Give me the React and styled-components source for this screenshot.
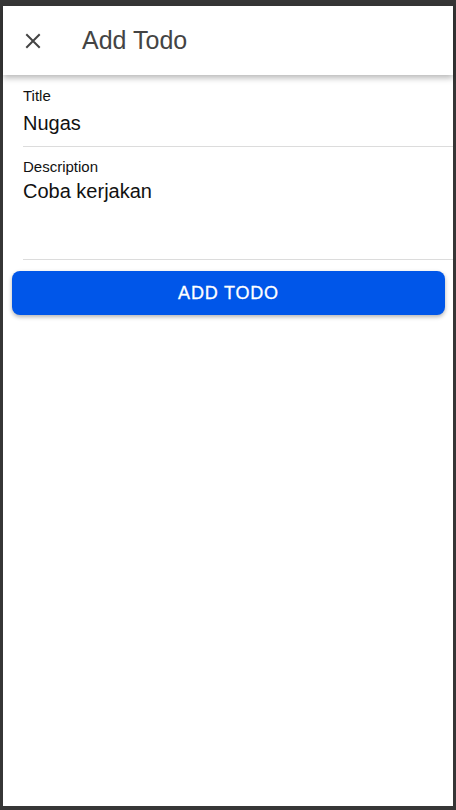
import React from "react";
import styled, { createGlobalStyle } from "styled-components";

const Global = createGlobalStyle`
  html, body { margin: 0; padding: 0; background: #363636; }
  body { font-family: "Liberation Sans", Arial, sans-serif; }
  * { box-sizing: border-box; }
`;

const Screen = styled.div`
  margin: 6px 3px 0 3px;
  height: 800px;
  background: #fff;
  display: flex;
  flex-direction: column;
`;

const Header = styled.header`
  height: 69px;
  display: flex;
  align-items: center;
  background: #fff;
  box-shadow: 0 3px 6px rgba(0, 0, 0, 0.28);
  position: relative;
  z-index: 1;
`;

const CloseButton = styled.button`
  width: 30px;
  height: 30px;
  margin-left: 15px;
  padding: 0;
  border: none;
  background: transparent;
  display: flex;
  align-items: center;
  justify-content: center;
`;

const Title = styled.h1`
  margin: 0 0 0 34px;
  font-size: 25px;
  font-weight: 400;
  color: #444;
`;

const Form = styled.div`
  display: flex;
  flex-direction: column;
  padding-left: 20px;
`;

const Field = styled.div`
  display: flex;
  flex-direction: column;
  padding-top: ${(p) => p.$top}px;
  height: ${(p) => p.$height}px;
  border-bottom: 1px solid #dcdcdc;
`;

const Label = styled.label`
  font-size: 15px;
  line-height: 16px;
  color: #111;
`;

const Value = styled.div`
  font-size: 20px;
  line-height: 24px;
  color: #111;
  margin-top: ${(p) => p.$gap}px;
`;

const ButtonWrap = styled.div`
  padding: 11px 8px 0 9px;
`;

const AddButton = styled.button`
  width: 100%;
  height: 44px;
  border: none;
  border-radius: 8px;
  background: #0056e9;
  color: #fff;
  font-family: "Liberation Sans", Arial, sans-serif;
  font-size: 18px;
  letter-spacing: 0.8px;
  -webkit-text-stroke: 0.3px #fff;
  box-shadow: 0 2px 4px rgba(0, 0, 0, 0.3);
`;

export default function App() {
  return (
    <>
      <Global />
      <Screen>
        <Header>
          <CloseButton aria-label="close">
            <svg width="16" height="16" viewBox="0 0 16 16">
              <path d="M2 2 L14 14 M14 2 L2 14" stroke="#444" strokeWidth="2" strokeLinecap="square" />
            </svg>
          </CloseButton>
          <Title>Add Todo</Title>
        </Header>
        <Form>
          <Field $top={13} $height={72}>
            <Label>Title</Label>
            <Value $gap={7}>Nugas</Value>
          </Field>
          <Field $top={12} $height={113}>
            <Label>Description</Label>
            <Value $gap={4}>Coba kerjakan</Value>
          </Field>
        </Form>
        <ButtonWrap>
          <AddButton>ADD TODO</AddButton>
        </ButtonWrap>
      </Screen>
    </>
  );
}
